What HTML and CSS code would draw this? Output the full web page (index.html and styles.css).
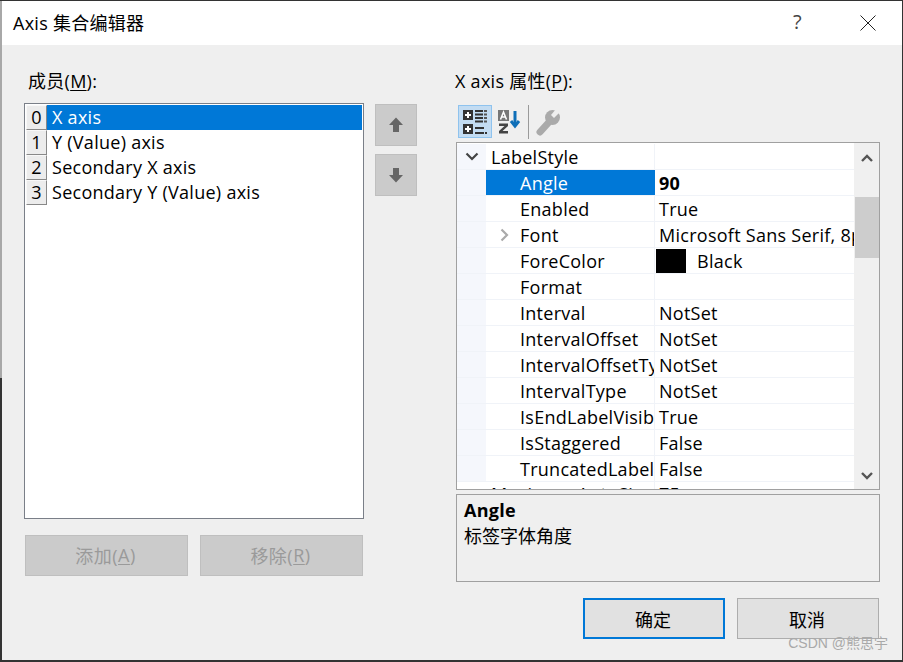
FILE: index.html
```html
<!DOCTYPE html>
<html lang="zh">
<head>
<meta charset="utf-8">
<title>Axis 集合编辑器</title>
<link rel="stylesheet" href="styles.css">
</head>
<body>
<div class="window">
  <header class="titlebar">
    <span class="title">Axis 集合编辑器</span>
    <span class="help">?</span>
    <svg class="close" width="16" height="16" viewBox="0 0 16 16"><path d="M.5.5l15 15M15.500.5l-15 15" stroke="#222" fill="none"/></svg>
  </header>
  <div class="content">
    <section class="left">
      <div class="label">成员(<u>M</u>):</div>
      <div class="list-row">
        <div class="listbox">
          <div class="item selected"><span class="idx">0</span><span class="name">X axis</span></div>
          <div class="item"><span class="idx">1</span><span class="name">Y (Value) axis</span></div>
          <div class="item"><span class="idx">2</span><span class="name">Secondary X axis</span></div>
          <div class="item"><span class="idx">3</span><span class="name">Secondary Y (Value) axis</span></div>
        </div>
        <div class="movers">
          <div class="mover"><svg width="16" height="16" viewBox="0 0 16 16"><path d="M8 .5L15 8H11V15H5V8H1Z" fill="#666"/></svg></div>
          <div class="mover"><svg width="16" height="16" viewBox="0 0 16 16"><path d="M8 15.500L15 8H11V1H5V8H1Z" fill="#666"/></svg></div>
        </div>
      </div>
      <div class="actions">
        <div class="btn disabled">添加(<u>A</u>)</div>
        <div class="btn disabled">移除(<u>R</u>)</div>
      </div>
    </section>
    <section class="right">
      <div class="label">X axis 属性(<u>P</u>):</div>
      <div class="toolbar">
        <div class="tool active">
          <svg width="26" height="28" viewBox="0 0 26 28">
            <path d="M1 2h10v10H1zM1 16h10v10H1z" fill="#333"/>
            <path d="M3 7h6M6 4v6M3 21h6M6 18v6" stroke="#fff" stroke-width="2"/>
            <path d="M13 3h8M13 6.500h8M13 10h8M13 13.500h8" stroke="#333" stroke-width="2"/>
            <path d="M22 3h3M22 6.500h3M22 10h3M22 13.500h3" stroke="#555" stroke-width="2"/>
            <path d="M13 20h9M13 25h9M23 25h2" stroke="#333" stroke-width="2"/>
          </svg>
        </div>
        <div class="tool">
          <svg width="26" height="28" viewBox="0 0 26 28">
            <path d="M2 2h11v11H2z" fill="#777"/>
            <path d="M4.500 11.500L7.500 4l3 7.500M5.500 9h4" stroke="#fff" stroke-width="1.500" fill="none"/>
            <path d="M3 15.500h9v2.500l-5.500 5H12v2.500H3V23l5.500-5H3z" fill="#444"/>
            <path d="M19 3v15" stroke="#0e6fb8" stroke-width="3"/>
            <path d="M15 13l4 5 4-5" stroke="#0e6fb8" stroke-width="3" fill="none"/>
          </svg>
        </div>
        <div class="sep"></div>
        <div class="tool">
          <svg width="26" height="28" viewBox="0 0 26 28">
            <path d="M5 24L15 13" stroke="#aaa" stroke-width="7" stroke-linecap="round"/>
            <circle cx="17.500" cy="9.500" r="7.500" fill="#aaa"/>
            <path d="M26 3L19 10l-3-3 5-6z" fill="#efefef"/>
          </svg>
        </div>
      </div>
      <div class="grid-box">
        <div class="rows">
          <div class="row head"><span class="gut"><svg width="14" height="9" viewBox="0 0 14 9"><path d="M1.500 1.500L7 7l5.500-5.500" stroke="#444" stroke-width="2.200" fill="none"/></svg></span><span class="pname">LabelStyle</span><span class="pval"></span></div>
          <div class="row selected"><span class="gut"></span><span class="pname ind">Angle</span><span class="pval strong">90</span></div>
          <div class="row"><span class="gut"></span><span class="pname ind">Enabled</span><span class="pval">True</span></div>
          <div class="row"><span class="gut"></span><span class="pname exp"><svg width="9" height="14" viewBox="0 0 9 14"><path d="M1.500 1.500L7 7l-5.500 5.500" stroke="#aaa" stroke-width="2.200" fill="none"/></svg>Font</span><span class="pval">Microsoft Sans Serif, 8pt</span></div>
          <div class="row"><span class="gut"></span><span class="pname ind">ForeColor</span><span class="pval"><span class="swatch"></span>Black</span></div>
          <div class="row"><span class="gut"></span><span class="pname ind">Format</span><span class="pval"></span></div>
          <div class="row"><span class="gut"></span><span class="pname ind">Interval</span><span class="pval">NotSet</span></div>
          <div class="row"><span class="gut"></span><span class="pname ind">IntervalOffset</span><span class="pval">NotSet</span></div>
          <div class="row"><span class="gut"></span><span class="pname ind">IntervalOffsetType</span><span class="pval">NotSet</span></div>
          <div class="row"><span class="gut"></span><span class="pname ind">IntervalType</span><span class="pval">NotSet</span></div>
          <div class="row"><span class="gut"></span><span class="pname ind">IsEndLabelVisible</span><span class="pval">True</span></div>
          <div class="row"><span class="gut"></span><span class="pname ind">IsStaggered</span><span class="pval">False</span></div>
          <div class="row"><span class="gut"></span><span class="pname ind">TruncatedLabels</span><span class="pval">False</span></div>
          <div class="row head"><span class="gut"></span><span class="pname">MaximumAutoSize</span><span class="pval">75</span></div>
        </div>
        <div class="scrollbar">
          <svg width="14" height="10" viewBox="0 0 14 10"><path d="M2 8l5-5 5 5" stroke="#555" stroke-width="2.400" fill="none"/></svg>
          <div class="thumb"></div>
          <svg class="down" width="14" height="10" viewBox="0 0 14 10"><path d="M2 2l5 5 5-5" stroke="#555" stroke-width="2.400" fill="none"/></svg>
        </div>
      </div>
      <div class="desc">
        <div class="desc-title">Angle</div>
        <div class="desc-text">标签字体角度</div>
      </div>
      <div class="footer">
        <div class="btn primary">确定</div>
        <div class="btn">取消</div>
      </div>
    </section>
  </div>
  <div class="watermark">CSDN @熊思宇</div>
</div>
</body>
</html>
```
FILE: styles.css
```css
* { box-sizing: border-box; }
html, body { margin: 0; padding: 0; }
body {
  width: 903px; height: 662px; overflow: hidden;
  font-family: "Open Sans", "Noto Sans CJK SC", sans-serif;
  font-size: 18px; letter-spacing: .27px; color: #000;
}
u { text-underline-offset: 2px; }
.window {
  position: relative;
  width: 903px; height: 662px;
  display: flex; flex-direction: column;
  background: #efefef;
  border: 1px solid #333;
  border-left-width: 2px;
  border-bottom-width: 2px;
}
.window::before {
  content: ""; position: absolute;
  left: -2px; top: 0; width: 2px; height: 377px;
  background: #a8a8a8;
}
.titlebar {
  height: 44px; flex: none; background: #fff;
  display: flex; align-items: center;
  padding: 0 26px 3px 11px;
}
.title { flex: 1; }
.help { width: 67px; font-size: 20px; color: #444; letter-spacing: 0; }
.close { margin-top: 3px; }
.content { flex: 1; display: flex; padding: 0 0 0 22px; }
.left { width: 431px; display: flex; flex-direction: column; flex: none; }
.label { height: 58px; padding: 23px 0 0 4px; line-height: 26px; }
.list-row { display: flex; gap: 11px; height: 416px; }
.listbox {
  width: 340px; height: 416px; background: #fff;
  border: 1px solid #7a7f88; padding: 1px 1px;
}
.item { display: flex; height: 25px; line-height: 25px; }
.idx {
  width: 21px; flex: none; text-align: center;
  background: #ececec;
  border: 1px solid; border-color: #f8f8f8 #888 #888 #f8f8f8;
  line-height: 23px;
}
.name { flex: 1; padding-left: 5px; }
.item.selected .name { background: #0078d7; color: #fff; }
.movers { display: flex; flex-direction: column; gap: 8px; padding-top: 1px; }
.mover {
  width: 42px; height: 42px;
  background: #cbcbcb; border: 1px solid #bfbfbf;
  display: flex; align-items: center; justify-content: center;
}
.actions { display: flex; gap: 12px; padding: 16px 0 0 1px; }
.btn {
  width: 142px; height: 41px; letter-spacing: 0; padding-right: 2px;
  background: #e1e1e1; border: 1px solid #adadad;
  display: flex; align-items: center; justify-content: center;
}
.btn.disabled { width: 163px; background: #cbcbcb; border-color: #bfbfbf; color: #9a9a9a; padding-bottom: 2px; letter-spacing: .5px; }
.btn.primary { border: 2px solid #0078d7; }
.right { width: 425px; flex: none; display: flex; flex-direction: column; margin-left: 1px; }
.right .label { height: 60px; padding-left: 0; margin-left: -1px; }
.toolbar { display: flex; align-items: center; height: 37px; padding: 0 0 4px 2px; }
.tool { width: 34px; height: 33px; display: flex; align-items: center; justify-content: center; border: 1px solid transparent; }
.tool.active { background: #c3dcf2; border-color: #8fc3ee; }
.sep { width: 1px; height: 34px; background: #9a9a9a; margin: 0 2px; }
.grid-box {
  height: 348px; width: 424px; flex: none;
  border: 1px solid #a0a0a0; background: #fff;
  display: flex;
}
.rows { width: 397px; flex: none; overflow: hidden; padding-top: 1px; }
.row { display: flex; height: 26px; line-height: 27px; border-bottom: 1px solid #f0f3f8; }
.row:last-child { line-height: 25px; }
.gut { width: 29px; flex: none; background: #f5f7fc; display: flex; align-items: center; justify-content: center; }
.row:last-child .gut { background: #fff; }
.pname { width: 169px; flex: none; padding-left: 5px; overflow: hidden; white-space: nowrap; border-right: 1px solid #f0f3f8; }
.pname.ind { padding-left: 34px; }
.pname.exp { padding: 1px 0 0 14px; display: flex; align-items: center; }
.pname.exp svg { margin-right: 11px; flex: none; }
.pval { flex: 1; padding: 2px 0 0 4px; line-height: 23px; white-space: nowrap; overflow: hidden; display: flex; align-items: center; }
.row:last-child .pval { padding-top: 0; }
.strong { font-weight: 700; }
.row.selected .pname { background: #0078d7; color: #fff; border-right-color: #0078d7; }
.swatch { width: 30px; height: 24px; background: #000; margin: -2px 11px 0 -3px; flex: none; }
.scrollbar {
  flex: 1; background: #f0f0f0; position: relative;
  display: flex; flex-direction: column; align-items: center; padding-top: 10px;
}
.thumb { width: 24px; height: 61px; background: #cdcdcd; margin-top: 34px; }
.scrollbar .down { margin-top: auto; margin-bottom: 8px; }
.desc {
  height: 88px; width: 424px; flex: none; margin-top: 4px;
  border: 1px solid #a0a0a0; padding: 3px 7px; line-height: 25px;
}
.desc-title { font-weight: 700; }
.desc-text { letter-spacing: 0; margin-top: 1px; }
.footer { display: flex; gap: 12px; padding: 16px 0 0 127px; }
.watermark {
  position: absolute; right: 14px; bottom: 8px; letter-spacing: 0;
  font-size: 14px; color: #a9a9a9; font-family: "Liberation Sans", "Noto Sans CJK SC", sans-serif;
}
```
